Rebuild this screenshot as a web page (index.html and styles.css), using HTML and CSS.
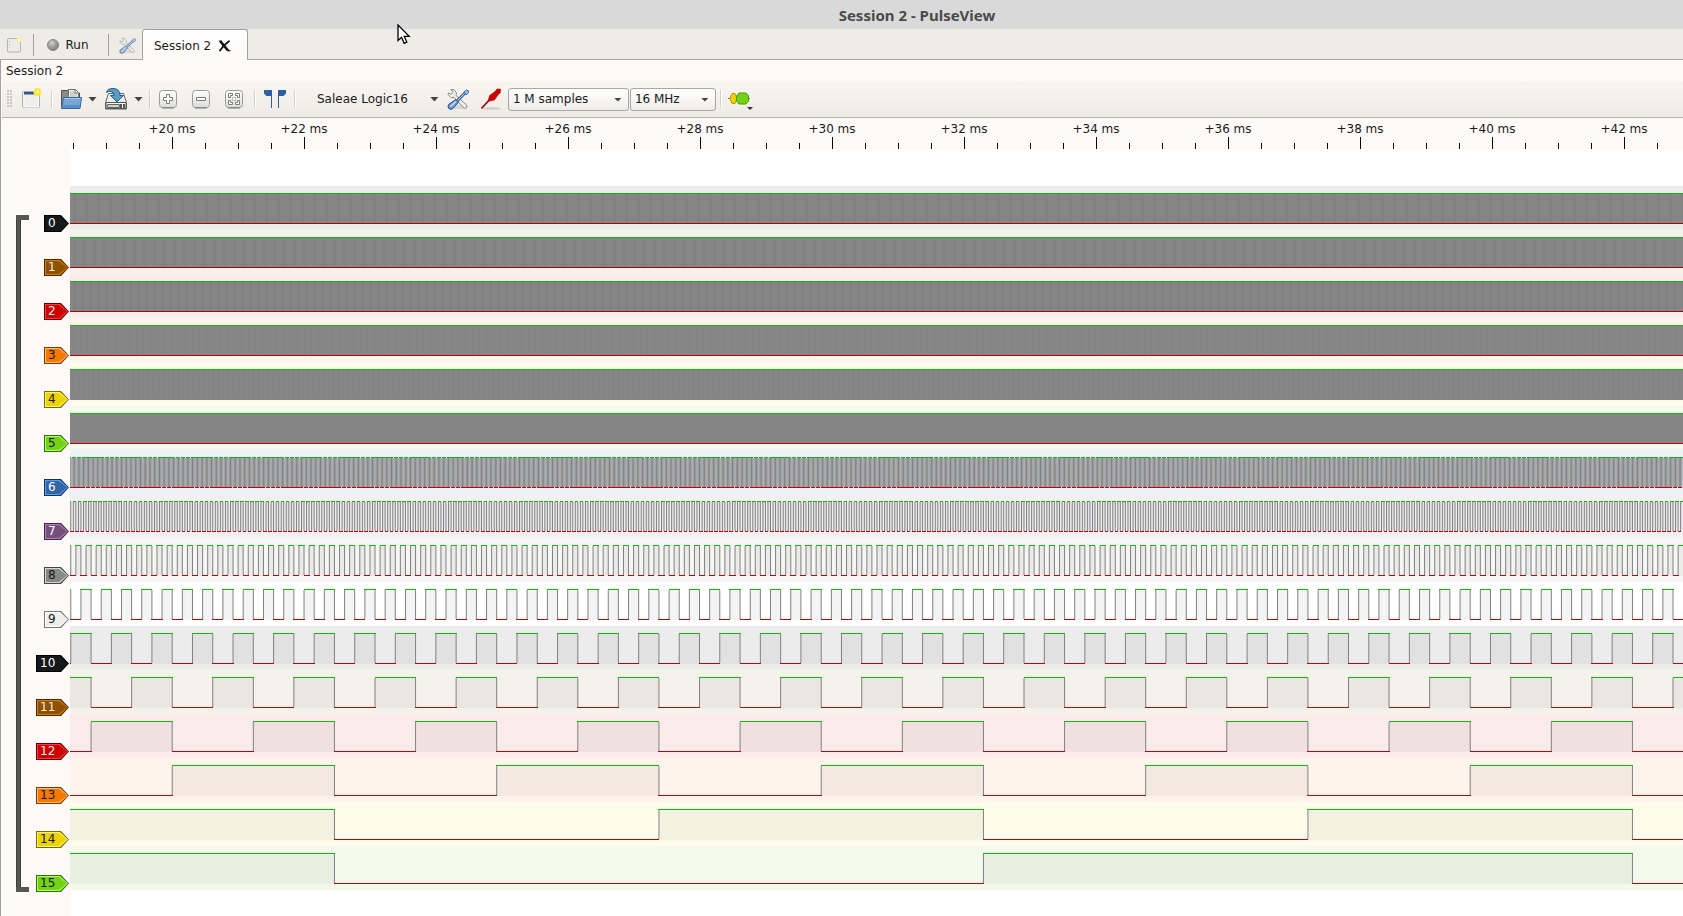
FILE: index.html
```
<!DOCTYPE html>
<html lang="en">
<head>
<meta charset="utf-8">
<title>Session 2 - PulseView</title>
<link rel="stylesheet" href="styles.css">
</head>
<body>
<header class="titlebar">Session 2 - PulseView</header>

<nav class="tabbar">
  <button class="tool new-tab" aria-label="New session">
    <svg width="16" height="16" viewBox="0 0 16 16"><rect x="1.500" y="1.500" width="13" height="13.500" rx="1" fill="#ebebe9" stroke="#b4b4b0"/><path d="M3.500 4v8" stroke="#ccc" stroke-dasharray="1 2"/><circle cx="13" cy="3" r="2.500" fill="#f5ee9c"/><circle cx="13" cy="3" r="1" fill="#fffde0"/></svg>
  </button>
  <span class="bar-line"></span>
  <button class="tool run">
    <svg width="12" height="12" viewBox="0 0 12 12"><defs><radialGradient id="led" cx=".38" cy=".3" r=".75"><stop offset="0" stop-color="#d0d1ce"/><stop offset=".5" stop-color="#a0a29e"/><stop offset="1" stop-color="#777974"/></radialGradient></defs><circle cx="6" cy="6" r="5.500" fill="url(#led)" stroke="#858782"/></svg>
    <span>Run</span>
  </button>
  <span class="bar-line"></span>
  <button class="tool settings" aria-label="Settings">
    <svg class="faded" width="17" height="17" viewBox="0 0 22 22"><use href="#tools"/></svg>
  </button>
  <div class="tab">
    <span>Session 2</span>
    <button class="close" aria-label="Close tab"><svg width="13" height="12" viewBox="0 0 13 12"><path d="M2.500 1.500L10 10.500" stroke="#111" stroke-width="2.600"/><path d="M11 1.200Q6 4.500 2 10.500" stroke="#111" stroke-width="1.800" fill="none" stroke-linecap="round"/><path d="M1 1.200h3M9.500 10.700h3" stroke="#111" stroke-width="1.200"/></svg></button>
  </div>
</nav>

<main class="session">
  <h1 class="dock-title">Session 2</h1>

  <div class="toolbar">
    <span class="grip"></span>
    <button class="tool std" aria-label="New view">
      <svg width="22" height="22" viewBox="0 0 22 22"><rect x="2.500" y="3.500" width="17" height="16" rx="1" fill="#eeeeec" stroke="#a9aba6"/><path d="M4 5h14.500v14H4z" fill="none" stroke="#fff"/><path d="M4 4h12v2.500H4z" fill="#2e5597"/><circle cx="17.500" cy="4" r="4" fill="#fce94f"/><circle cx="17.500" cy="4" r="2" fill="#fffcc0" stroke="#f7e400"/></svg>
    </button>
    <span class="sep"></span>
    <button class="tool open" aria-label="Open">
      <svg width="22" height="22" viewBox="0 0 22 22"><path d="M1.500 20V2.500H9V5h10.500v13" fill="#8b8d88" stroke="#555753"/><path d="M8.500 12V1.500h7l3 3V12z" fill="#f5f5f3" stroke="#6b6d68"/><path d="M10 4h5M10 6h7M10 8h7" stroke="#aaaca8"/><path d="M15 1.500V5h3.500" fill="none" stroke="#777"/><path d="M3.500 9.500h18l-1.500 11H1.500z" fill="#78a4d8" stroke="#3465a4"/><path d="M4.500 10.500h16" stroke="#a9c8ec"/><path d="M2.800 17h17v3H2.500z" fill="#5d8dc7"/></svg>
    </button>
    <button class="tool drop" aria-label="Open menu"><span class="arrow"></span></button>
    <button class="tool save" aria-label="Save">
      <svg width="24" height="22" viewBox="0 0 24 22"><path d="M4.500 5.500h15l3 9v6.500h-21v-6.500z" fill="#eeeeec" stroke="#646661"/><path d="M2 14.500h20v6H2z" fill="#f6f6f4" stroke="#555753"/><path d="M3.500 16.500h12v3h-12z" fill="#cfd1cd" stroke="#666"/><path d="M17 16v4M20 16v4" stroke="#222" stroke-width="1.500"/><path d="M2.500 4.500Q3 .5 9 .5q7 0 7 7h3.500L13 14 6.500 7.500H10Q10 4 7 3.500 4 3 2.500 4.500z" fill="#5b9bc4" stroke="#1f5f8b"/></svg>
    </button>
    <button class="tool drop" aria-label="Save menu"><span class="arrow"></span></button>
    <span class="sep tight"></span>
    <button class="tool std" aria-label="Zoom in">
      <svg width="20" height="20" viewBox="0 0 20 20"><use href="#plate"/><path d="M8.500 5.500h3v3h3v3h-3v3h-3v-3h-3v-3h3z" fill="#fff" stroke="#7a7c77"/></svg>
    </button>
    <button class="tool std" aria-label="Zoom out">
      <svg width="20" height="20" viewBox="0 0 20 20"><use href="#plate"/><path d="M5.500 8.500h9v3h-9z" fill="#fff" stroke="#7a7c77"/></svg>
    </button>
    <button class="tool std" aria-label="Zoom to fit">
      <svg width="20" height="20" viewBox="0 0 20 20"><use href="#plate"/><path d="M4.500 4.500h4v2h-2v2h-2zM11.500 4.500h4v4h-2v-2h-2zM4.500 11.500h2v2h2v2h-4zM13.500 11.500h2v4h-4v-2h2z" fill="#fff" stroke="#7a7c77"/><path d="M8.500 8.500h3v3h-3z" fill="#fff" stroke="#bbb"/></svg>
    </button>
    <span class="sep"></span>
    <button class="tool flags" aria-label="Show cursors">
      <svg width="22" height="18" viewBox="0 0 22 18"><path d="M0 0h8v18H7V6H2.500L0 3.500zM14 0h8v3.500L19.500 6H15v12h-1z" fill="#2e5f9f"/></svg>
    </button>
    <span class="sep"></span>
    <button class="tool device"><span>Saleae Logic16</span><span class="arrow"></span></button>
    <button class="tool std" aria-label="Configure device">
      <svg width="22" height="22" viewBox="0 0 22 22"><defs>
        <g id="tools"><ellipse cx="13" cy="19" rx="8" ry="2" fill="#000" opacity=".1"/><path d="M4 1.500l3 .2 2.500 3-.5 2.800L19.500 17q1 2-1 3.200-1.500.3-2.300-1L7 9.300l-3 .4L1 6.500l.5-1.500 2.800 1.300 1.700-1.800z" fill="#eeeeec" stroke="#888a85"/><path d="M10.500 12.500L18 5" stroke="#3465a4" stroke-width="3"/><path d="M10.500 12.500L18 5" stroke="#c5d8ef" stroke-width="1"/><path d="M17 4l2.500-2 2 .8-.2 2.200-2.300 2z" fill="#9fc0e8" stroke="#3465a4"/><path d="M9 11.500l2.500 2.500-5.500 6.500q-2.500 1.800-4.500-.2-1-2 .3-4z" fill="#6f9bd1" stroke="#204a87"/><path d="M9 13.500l-5.500 5" stroke="#cfe0f5" stroke-width="1.300"/></g>
        <linearGradient id="plateFill" x2="0" y2="1"><stop offset="0" stop-color="#fff"/><stop offset="1" stop-color="#dcdcda"/></linearGradient>
        <g id="plate"><rect x="1.500" y="1.500" width="17" height="17" rx="3" fill="url(#plateFill)" stroke="#9a9c97"/><path d="M4 19h12" stroke="#767873"/></g>
      </defs><use href="#tools"/></svg>
    </button>
    <button class="tool std" aria-label="Channels">
      <svg width="22" height="22" viewBox="0 0 22 22"><ellipse cx="12" cy="20.500" rx="9" ry="1.500" fill="#000" opacity=".12"/><path d="M1.500 20.500L11 10" stroke="#a40000" stroke-width="1.700"/><path d="M8 13.500l1.500-6 5.500-4L17 1h3.500v3.500L18 7l-3.500 5z" fill="#cc0000" stroke="#a40000" stroke-width=".5"/></svg>
    </button>
    <label class="combo samples"><select aria-label="Sample count"><option>1 M samples</option></select></label>
    <label class="combo rate"><select aria-label="Sample rate"><option>16 MHz</option></select></label>
    <span class="sep"></span>
    <button class="tool decoder" aria-label="Add protocol decoder">
      <svg width="26" height="22" viewBox="0 0 26 22"><path d="M0 10.500h22" stroke="#777"/><path d="M4 5.500h3l2 5-2 5H4l-2-5z" fill="#edd400" stroke="#b39b00"/><path d="M11 5h7l2.500 3v5L18 16h-7l-2.500-3V8z" fill="#73d216" stroke="#4e9a06"/><path d="M19 19h6l-3 3z" fill="#333"/></svg>
    </button>
  </div>

  <div class="ruler">
    <span>+20 ms</span><span>+22 ms</span><span>+24 ms</span><span>+26 ms</span><span>+28 ms</span><span>+30 ms</span><span>+32 ms</span><span>+34 ms</span><span>+36 ms</span><span>+38 ms</span><span>+40 ms</span><span>+42 ms</span>
  </div>

  <div class="view">
    <aside class="gutter">
      <div class="bracket"></div>
      <ol class="tags">
        <li class="tag black">0</li>
        <li class="tag brown">1</li>
        <li class="tag red">2</li>
        <li class="tag orange">3</li>
        <li class="tag yellow">4</li>
        <li class="tag green">5</li>
        <li class="tag blue">6</li>
        <li class="tag violet">7</li>
        <li class="tag grey">8</li>
        <li class="tag white">9</li>
        <li class="tag black wide">10</li>
        <li class="tag brown wide">11</li>
        <li class="tag red wide">12</li>
        <li class="tag orange wide">13</li>
        <li class="tag yellow wide">14</li>
        <li class="tag green wide">15</li>
      </ol>
    </aside>
    <div class="traces" id="traces"></div>
  </div>
</main>

<svg class="pointer" width="14" height="21" viewBox="0 0 14 21"><path d="M1 1v15.500l3.500-3.200 2.700 6 2.600-1.200L7.200 12.300h5z" fill="#fff" stroke="#000" stroke-width="1.300"/></svg>
<script src="traces.js"></script>
</body>
</html>
```
FILE: styles.css
```
* { box-sizing: border-box; }
body {
  margin: 0;
  min-height: 100vh;
  display: flex;
  flex-direction: column;
  overflow: hidden;
  background: #fdf9f6;
  color: #1a1a1a;
  font: 12px/16px "DejaVu Sans", sans-serif;
}
button, select { font: inherit; color: inherit; }
svg { display: block; }

.titlebar {
  height: 29px;
  padding: 1px 0 0 151px;
  background: #d9d9d9;
  color: #4a4a4a;
  font: bold 15px/29px "Noto Sans", "Open Sans", sans-serif;
  text-align: center;
}

.tool {
  display: flex;
  align-items: center;
  justify-content: center;
  flex: none;
  padding: 0;
  border: 0;
  background: none;
}

.tabbar {
  display: flex;
  align-items: center;
  height: 31px;
  padding-top: 2px;
  background: #efebe7;
  border-bottom: 1px solid #aaa6a3;
}
.new-tab { width: 28px; margin-right: 5px; }
.bar-line { width: 1px; height: 22px; background: #a3a09d; }
.run { width: 74px; gap: 6px; padding-right: 6px; }
.settings { width: 33px; padding-left: 4px; }
.faded { opacity: .7; }
.tab {
  display: flex;
  align-items: center;
  gap: 7px;
  align-self: stretch;
  margin: -2px 0 -1px;
  padding: 2px 16px 0 11px;
  border: 1px solid #a3a09d;
  border-bottom: 0;
  border-radius: 3px 3px 0 0;
  background: linear-gradient(#fff, #fdf9f6);
}
.close { padding: 0; border: 0; background: none; }

.session {
  flex: 1;
  display: flex;
  flex-direction: column;
  border-left: 1px solid #a3a09d;
}
.dock-title {
  margin: 0;
  padding: 3px 5px 2px;
  font-size: 12px;
  font-weight: normal;
}
.toolbar {
  display: flex;
  align-items: center;
  height: 37px;
  margin-left: 1px;
  padding-left: 5px;
  background: linear-gradient(#f9f6f2, #eeebe6);
  border-bottom: 1px solid #b5b1ad;
}
.grip {
  width: 5px;
  height: 18px;
  margin-right: 2px;
  background: radial-gradient(circle at 1px 1px, #c9c5c0 1px, transparent 1px) 0 0 / 3px 3px;
}
.std { width: 33px; }
.open { width: 29px; }
.save { width: 31px; }
.drop { width: 15px; }
.flags { width: 31px; }
.sep {
  flex: none;
  width: 9px;
  height: 18px;
  background: linear-gradient(90deg, #d2cec9 1px, #fff 1px, #fff 2px, transparent 2px) 4px 0 no-repeat;
}
.tight { width: 5px; background-position: 3px 0; }
.arrow {
  width: 9px;
  height: 5px;
  background: #444;
  clip-path: polygon(0 0, 100% 0, 50% 100%);
}
.device { gap: 22px; padding: 0 3px 0 18px; }
.combo {
  position: relative;
  height: 23px;
  border: 1px solid #aaa7a3;
  border-radius: 3px;
  background: linear-gradient(#fff, #efedea);
}
.combo select {
  width: 100%;
  height: 21px;
  padding: 0 20px 0 4px;
  border: 0;
  appearance: none;
  background: none;
}
.combo::after {
  content: "";
  position: absolute;
  top: 9px;
  right: 6px;
  width: 8px;
  height: 4px;
  background: #444;
  clip-path: polygon(0 0, 100% 0, 50% 100%);
  pointer-events: none;
}
.samples { width: 121px; margin-right: 1px; }
.rate { width: 86px; }
.decoder { width: 32px; }

.ruler {
  display: flex;
  height: 31px;
  margin-left: 69px;
  padding-left: 36px;
  overflow: hidden;
  background: linear-gradient(90deg, #000 1px, transparent 1px) 3px 100% / 33px 6px repeat-x;
}
.ruler span {
  flex: none;
  width: 132px;
  padding: 3px 0 0;
  text-align: center;
  background: linear-gradient(#000, #000) 66px 100% / 1px 12px no-repeat;
}

.view {
  flex: 1;
  display: grid;
  grid-template-columns: 69px 1fr;
}
.gutter {
  display: flex;
  justify-content: space-between;
  align-items: stretch;
  align-self: start;
  padding: 66px 1px 0 15px;
}
.bracket {
  width: 13px;
  background:
    linear-gradient(#555753, #555753) 0 0 / 100% 5px no-repeat,
    linear-gradient(#555753, #555753) 0 100% / 100% 5px no-repeat,
    linear-gradient(90deg, #3c3e3b 1px, #555753 1px, #555753 4px, #3c3e3b 4px) 0 0 / 5px 100% no-repeat;
}
.tags {
  display: flex;
  flex-direction: column;
  align-items: flex-end;
  gap: 27px;
  margin: 0;
  padding: 0;
  list-style: none;
}
.tag {
  position: relative;
  z-index: 0;
  width: 25px;
  height: 17px;
  padding-left: 4px;
  line-height: 17px;
  background: var(--edge);
}
.wide { width: 33px; }
.tag, .tag::before, .tag::after {
  clip-path: polygon(0 0, calc(100% - 8px) 0, 100% 50%, calc(100% - 8px) 100%, 0 100%);
}
.tag::before, .tag::after {
  content: "";
  position: absolute;
  z-index: -1;
  inset: 1px;
  background: var(--light);
}
.tag::after { inset: 2px; background: var(--fill); }
.black { --fill: #16191a; --light: #16191a; --edge: #000; color: #fff; }
.brown { --fill: #8f5202; --light: #d97d05; --edge: #472901; color: #f5e9d8; }
.red { --fill: #cc0000; --light: #ff3a3a; --edge: #660000; color: #ffe8e8; }
.orange { --fill: #f57900; --light: #ffb870; --edge: #7a3c00; }
.yellow { --fill: #edd400; --light: #fff27a; --edge: #766a00; }
.green { --fill: #73d216; --light: #b0ff62; --edge: #39690b; }
.blue { --fill: #3465a4; --light: #529eff; --edge: #1a3252; color: #fff; }
.violet { --fill: #75507b; --light: #b77ec0; --edge: #3a283d; color: #fff; }
.grey { --fill: #888a85; --light: #d4d7d0; --edge: #444542; }
.white { --fill: #eeeeec; --light: #fff; --edge: #777776; }

.traces {
  min-width: 0;
  padding-top: 37px;
  overflow: hidden;
  background: #fff;
}
.trace { width: 100%; height: 44px; }
.high { fill: #000; fill-opacity: .045; }
.edge { stroke: #808080; fill: none; }
.dense { fill: #868686; }
.ripple { fill: #000; fill-opacity: .025; }
.top { fill: #08bc08; }
.bottom { fill: #bf0000; }
.dim { fill: #3b0f0f; fill-opacity: .3; }
.pointer { position: absolute; left: 397px; top: 24px; }
```
FILE: traces.js
```
// Draws the 16 logic channels: channel n carries bit n of a free-running counter.
const TINTS = ['#ececec', '#f5f1eb', '#fbebeb', '#fff4eb', '#fefdeb', '#f3faec', '#eef2f8', '#f2f0f3', '#f6f6f5', '#ffffff'];
const WRAP_X = 264.45;
const WRAP_SPAN = 649;
const TOP = 7;
const BOTTOM = 37;

function denseTrace(bit, width) {
  let ripple = '';
  let dots = '';
  const step = [12, 10, 8, 7, 5, 4][bit];
  for (let x = 3; x < width; x += step) {
    ripple += `M${x} 8h${bit < 3 ? 3 : 1}v29h-${bit < 3 ? 3 : 1}z`;
  }
  for (let x = 0; x < width; x += bit === 3 ? 6 : 2) {
    dots += `M${x} 37h1v1h-1z`;
  }
  let out = `<rect class="dense" y="8" width="${width}" height="30"/><path class="ripple" d="${ripple}"/>`;
  out += `<rect class="top" y="${TOP}" width="${width}" height="1"/>`;
  if (bit !== 4) out += `<rect class="bottom" y="${BOTTOM}" width="${width}" height="1"/>`;
  if (bit < 4) out += `<path class="dim" d="${dots}"/>`;
  return out;
}

function squareTrace(bit, width) {
  const half = WRAP_SPAN / 2 ** (15 - bit);
  let fills = '', edges = '', tops = '', bottoms = '';
  for (let k = Math.floor(-WRAP_X / half); WRAP_X + k * half < width; k++) {
    const from = WRAP_X + k * half;
    const left = Math.floor(from);
    const span = Math.floor(from + half) + 1 - left;
    if (k & 1) {
      fills += `M${from} ${TOP}h${half}v31h-${half}z`;
      tops += `M${left} ${TOP}h${span}v1h-${span}z`;
    } else {
      bottoms += `M${left} ${BOTTOM}h${span}v1h-${span}z`;
    }
    edges += `M${from} ${TOP + 1}V${BOTTOM}`;
  }
  return `<path class="high" d="${fills}"/><path class="edge" d="${edges}"/><path class="top" d="${tops}"/><path class="bottom" d="${bottoms}"/>`;
}

function render() {
  const host = document.getElementById('traces');
  const width = host.clientWidth;
  let html = '';
  for (let bit = 0; bit < 16; bit++) {
    const body = bit < 6 ? denseTrace(bit, width) : squareTrace(bit, width);
    html += `<svg class="trace"><rect width="100%" height="44" fill="${TINTS[bit % 10]}"/>${body}</svg>`;
  }
  host.innerHTML = html;
}

render();
window.addEventListener('resize', render);
```
